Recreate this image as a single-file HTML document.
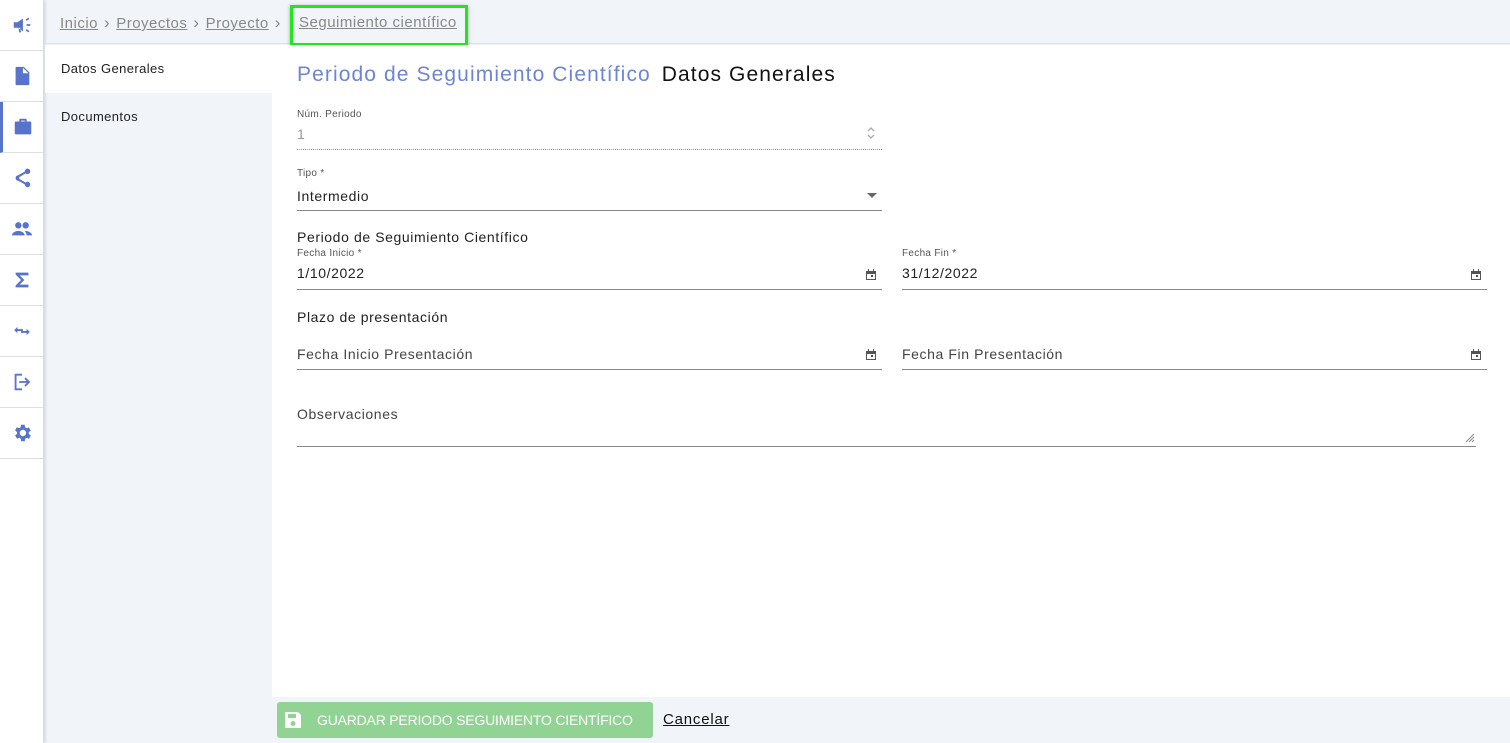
<!DOCTYPE html>
<html><head><meta charset="utf-8"><style>
*{box-sizing:border-box;margin:0;padding:0}
body{width:1510px;height:743px;overflow:hidden;font-family:"Liberation Sans",sans-serif;background:#f1f4f8;position:relative;color:#222}
.side{position:absolute;left:0;top:0;width:44px;height:743px;background:#fff;border-right:1px solid #ddd;box-shadow:1px 0 3px rgba(0,0,0,.15)}
.side div{height:51px;border-bottom:1px solid #e0e0e0;display:flex;align-items:center;justify-content:center}
.side svg{width:22px;height:22px;fill:#5873cc}
.bc{position:absolute;left:45px;top:0;right:0;height:44px;border-bottom:1px solid #dde2e8;font-size:15px;color:#777;letter-spacing:.5px}
.bc span{position:absolute;top:14px}
.bc u{color:#888}
.bc i{font-style:normal;font-size:17px;color:#888;margin:0 6px}
.nav{position:absolute;left:45px;top:45px;width:227px}
.nav div{height:48px;padding-left:16px;line-height:48px;font-size:13px;color:#222;letter-spacing:.4px}
.main{position:absolute;left:272px;top:45px;right:0;height:652px;background:#fff}
.a{position:absolute;font-size:14px;letter-spacing:.6px}
.lbl{position:absolute;font-size:10px;color:#555;letter-spacing:.3px}
.line{position:absolute;height:1px;background:#888}
.cal{position:absolute;width:12px;height:12px}
.foot{position:absolute;left:272px;top:697px;right:0;height:46px;background:#f1f4f8}
</style></head><body>
<div class="side">
<div><svg viewBox="0 0 24 24"><path d="M3 9h4l6-4v14l-6-4H3z M8 15l1 5h2l-1-5z M17 11h4v2h-4z M16 6l3-2 1 1.5-3 2z M16 18l3 2 1-1.5-3-2z"/></svg></div>
<div><svg viewBox="0 0 24 24"><path d="M6 2h8l6 6v13a1 1 0 0 1-1 1H6a1 1 0 0 1-1-1V3a1 1 0 0 1 1-1zM13 3v6h6zM8 13h8v2H8zm0 4h8v2H8z"/></svg></div>
<div style="border-left:3px solid #5873cc"><svg viewBox="0 0 24 24"><path d="M9 3h6a1 1 0 0 1 1 1v2h4a1 1 0 0 1 1 1v12a1 1 0 0 1-1 1H4a1 1 0 0 1-1-1V7a1 1 0 0 1 1-1h4V4a1 1 0 0 1 1-1zm1 2v1h4V5z"/></svg></div>
<div><svg viewBox="0 0 24 24"><path d="M18 16a3 3 0 1 1-3 3l-7-4a3 3 0 1 1 0-6l7-4a3 3 0 1 1 1 2l-7 4v2l7 4a3 3 0 0 1 2-1z"/></svg></div>
<div><svg viewBox="0 0 24 24"><circle cx="8" cy="8" r="3.5"/><circle cx="16" cy="8" r="3.5"/><path d="M1 19c0-3 4-5 7-5s7 2 7 5zM15 14c3 0 8 1.5 8 5h-6c0-2-1-3.5-2-5z"/></svg></div>
<div><svg viewBox="0 0 24 24"><path d="M5 4h14v3H9.5l5 5-5 5H19v3H5v-2l6-6-6-6z"/></svg></div>
<div><svg viewBox="0 0 24 24"><path d="M7 10V7.5L3.5 11 7 14.5V12h6v-2zM20.5 13 17 9.5V12h-6v2h6v2.5z"/></svg></div>
<div><svg viewBox="0 0 24 24"><path d="M4 3h8v2H6v14h6v2H4zM16 7l5 5-5 5-1.4-1.4 2.6-2.6H9v-2h8.2l-2.6-2.6z"/></svg></div>
<div><svg viewBox="0 0 24 24"><path d="M19.4 13a7.5 7.5 0 0 0 0-2l2.1-1.6-2-3.5-2.5 1a7 7 0 0 0-1.7-1L15 3h-4l-.4 2.7a7 7 0 0 0-1.7 1l-2.5-1-2 3.5L6.6 11a7.5 7.5 0 0 0 0 2l-2.1 1.6 2 3.5 2.5-1a7 7 0 0 0 1.7 1L11 21h4l.4-2.7a7 7 0 0 0 1.7-1l2.5 1 2-3.5zM13 15.5a3.5 3.5 0 1 1 0-7 3.5 3.5 0 0 1 0 7z"/></svg></div>
</div>
<div class="bc">
<span style="left:15px;top:13px"><u>Inicio</u><i>›</i><u>Proyectos</u><i>›</i><u>Proyecto</u><i>›</i></span>
<span style="left:254px"><u>Seguimiento científico</u></span>
<div style="position:absolute;left:245px;top:5px;width:178px;height:41px;border:3px solid #22e51c;box-shadow:0 1px 4px rgba(0,0,0,.3)"></div>
</div>
<div class="nav"><div style="background:#fff">Datos Generales</div><div>Documentos</div></div>
<div class="main">
<div class="a" style="left:25px;top:18px;font-size:21px;color:#6e85d4;letter-spacing:1.1px">Periodo de Seguimiento Científico <span style="color:#111;margin-left:4px">Datos Generales</span></div>
<div class="lbl" style="left:25px;top:64px">Núm. Periodo</div>
<div class="a" style="left:25px;top:81px;color:#999">1</div>
<svg style="position:absolute;left:594px;top:80px;width:10px;height:16px" viewBox="0 0 10 16"><path d="M2 6l3-3 3 3M2 10l3 3 3-3" stroke="#aaa" fill="none" stroke-width="1.3"/></svg>
<div style="position:absolute;left:25px;top:104px;width:585px;border-top:1px dotted #999"></div>
<div class="lbl" style="left:25px;top:123px">Tipo *</div>
<div class="a" style="left:25px;top:143px">Intermedio</div>
<div style="position:absolute;left:595px;top:148px;border:5px solid transparent;border-top-color:#666"></div>
<div class="line" style="left:25px;top:165px;width:585px"></div>
<div class="a" style="left:25px;top:184px">Periodo de Seguimiento Científico</div>
<div class="lbl" style="left:25px;top:203px">Fecha Inicio *</div>
<div class="a" style="left:25px;top:220px">1/10/2022</div>
<div class="line" style="left:25px;top:244px;width:585px"></div>
<div class="lbl" style="left:630px;top:203px">Fecha Fin *</div>
<div class="a" style="left:630px;top:220px">31/12/2022</div>
<div class="line" style="left:630px;top:244px;width:585px"></div>
<div class="a" style="left:25px;top:264px">Plazo de presentación</div>
<div class="a" style="left:25px;top:301px;color:#444">Fecha Inicio Presentación</div>
<div class="line" style="left:25px;top:324px;width:585px"></div>
<div class="a" style="left:630px;top:301px;color:#444">Fecha Fin Presentación</div>
<div class="line" style="left:630px;top:324px;width:585px"></div>
<div class="a" style="left:25px;top:361px;color:#444">Observaciones</div>
<svg style="position:absolute;left:1193px;top:388px;width:10px;height:10px" viewBox="0 0 10 10"><path d="M9 1L1 9M9 4L4 9M9 7L7 9" stroke="#888"/></svg>
<div class="line" style="left:25px;top:401px;width:1179px"></div>
<svg class="cal" style="left:593px;top:224px" viewBox="0 0 12 12"><path d="M1 2h10v9H1zM2 5v5h8V5z M3 0h1v3H3zm5 0h1v3H8z M6 6h2v2H6z" fill="#555"/></svg>
<svg class="cal" style="left:1198px;top:224px" viewBox="0 0 12 12"><path d="M1 2h10v9H1zM2 5v5h8V5z M3 0h1v3H3zm5 0h1v3H8z M6 6h2v2H6z" fill="#555"/></svg>
<svg class="cal" style="left:593px;top:304px" viewBox="0 0 12 12"><path d="M1 2h10v9H1zM2 5v5h8V5z M3 0h1v3H3zm5 0h1v3H8z M6 6h2v2H6z" fill="#555"/></svg>
<svg class="cal" style="left:1198px;top:304px" viewBox="0 0 12 12"><path d="M1 2h10v9H1zM2 5v5h8V5z M3 0h1v3H3zm5 0h1v3H8z M6 6h2v2H6z" fill="#555"/></svg>
</div>
<div class="foot">
<div style="position:absolute;left:5px;top:5px;width:376px;height:36px;background:#90d393;border-radius:3px;color:#fff;font-size:14px;line-height:36px;padding-left:40px;letter-spacing:-.2px">GUARDAR PERIODO SEGUIMIENTO CIENTÍFICO
<svg style="position:absolute;left:7px;top:9px;width:18px;height:18px" viewBox="0 0 18 18"><path d="M1 1h13l3 3v13H1zM4 3v4h8V3zM9 10a2.5 2.5 0 1 0 0 5 2.5 2.5 0 0 0 0-5z" fill="#fff" fill-rule="evenodd"/></svg></div>
<div style="position:absolute;left:391px;top:14px;font-size:15px;text-decoration:underline;color:#111;letter-spacing:.8px">Cancelar</div>
</div>
</body></html>
